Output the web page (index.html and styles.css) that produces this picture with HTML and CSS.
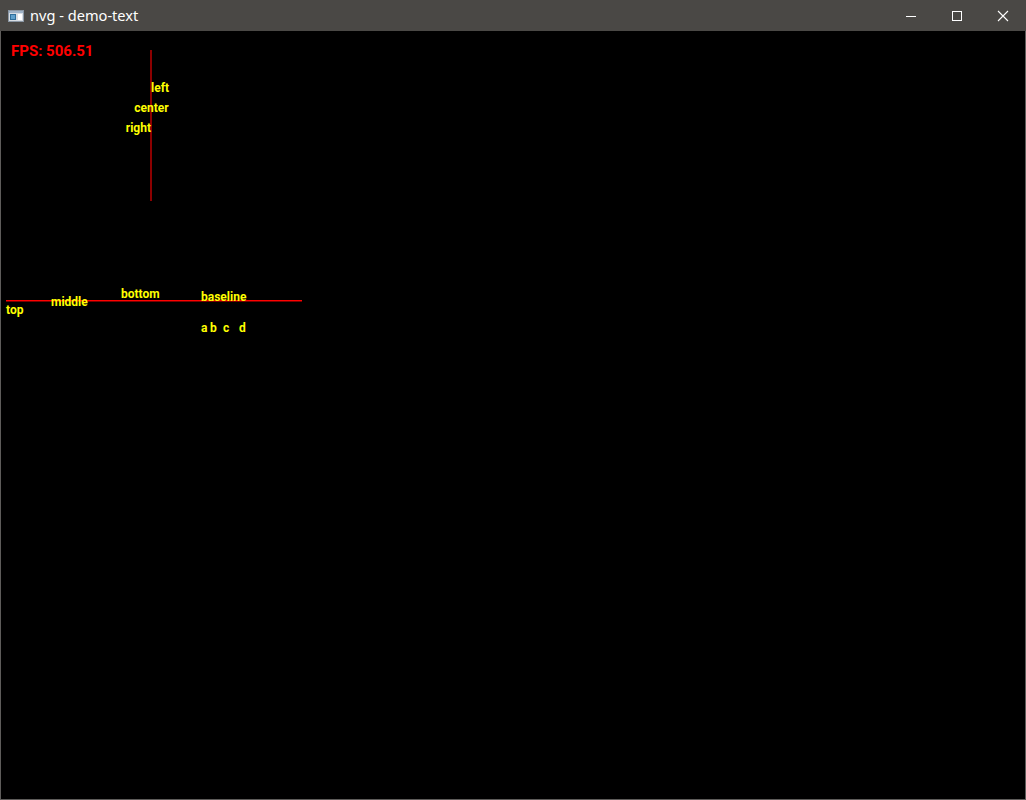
FILE: index.html
```html
<!DOCTYPE html>
<html>
<head>
<meta charset="utf-8">
<title>nvg - demo-text</title>
<link rel="stylesheet" href="styles.css">
</head>
<body>
<div class="window">
  <div class="titlebar">
    <div class="app">
      <svg class="app-icon" width="16" height="16" viewBox="0 0 16 16">
        <rect x="0.5" y="2.5" width="15" height="11" fill="#d8dde3" stroke="#8a96a3"/>
        <rect x="1" y="3" width="14" height="2" fill="#9fb2c6"/>
        <rect x="2" y="6" width="6" height="6" fill="#2f6e9a"/>
        <rect x="3" y="7" width="4" height="4" fill="#5fa0cc"/>
        <rect x="10" y="6" width="4" height="6" fill="#ffffff"/>
      </svg>
      <span class="title">nvg - demo-text</span>
    </div>
    <div class="controls">
      <div class="ctl"><svg width="12" height="12" viewBox="0 0 12 12"><path d="M1 6.5H11" stroke="#fff" stroke-width="1"/></svg></div>
      <div class="ctl"><svg width="12" height="12" viewBox="0 0 12 12"><rect x="1.5" y="1.5" width="9" height="9" fill="none" stroke="#fff" stroke-width="1"/></svg></div>
      <div class="ctl"><svg width="12" height="12" viewBox="0 0 12 12"><path d="M1 1L11 11M11 1L1 11" stroke="#fff" stroke-width="1.1"/></svg></div>
    </div>
  </div>
  <div class="canvas">
    <span class="fps">FPS: 506.51</span>
    <div class="vline"></div>
    <div class="hline"></div>
    <span class="lbl l-left">left</span>
    <span class="lbl l-center">center</span>
    <span class="lbl l-right">right</span>
    <span class="lbl l-top">top</span>
    <span class="lbl l-middle">middle</span>
    <span class="lbl l-bottom">bottom</span>
    <span class="lbl l-baseline">baseline</span>
    <span class="lbl ch ch-a">a</span>
    <span class="lbl ch ch-b">b</span>
    <span class="lbl ch ch-c">c</span>
    <span class="lbl ch ch-d">d</span>
  </div>
</div>
</body>
</html>
```
FILE: styles.css
```css
html, body {
  margin: 0;
  padding: 0;
  background: #000;
}
.window {
  width: 1026px;
  height: 800px;
  box-sizing: border-box;
  border: 1px solid #5e5c5a;
  border-top: none;
  display: flex;
  flex-direction: column;
  background: #000;
}
.titlebar {
  height: 31px;
  background: #4a4845;
  display: flex;
  align-items: center;
  justify-content: space-between;
  margin: 0 -1px;
  flex: none;
}
.app {
  display: flex;
  align-items: center;
  gap: 6px;
  padding-left: 8px;
}
.app-icon {
  display: block;
}
.title {
  font-family: "Noto Sans", "Open Sans", sans-serif;
  font-size: 14.6px;
  color: #ffffff;
  line-height: 16px;
  padding-bottom: 1px;
}
.controls {
  display: flex;
  height: 31px;
}
.ctl {
  width: 46px;
  height: 31px;
  display: flex;
  align-items: center;
  justify-content: center;
}
.ctl svg { display: block; }
.canvas {
  position: relative;
  flex: 1;
  background: #000;
  overflow: hidden;
}
.fps {
  position: absolute;
  left: 10px;
  top: 13px;
  font-family: Roboto, "Liberation Sans", sans-serif;
  font-weight: 700;
  font-size: 15px;
  line-height: 15px;
  color: #ff0000;
  white-space: nowrap;
}
.vline {
  position: absolute;
  left: 149px;
  top: 19px;
  width: 2px;
  height: 151px;
  background: #8c0000;
}
.hline {
  position: absolute;
  left: 5px;
  top: 269px;
  width: 296px;
  height: 1px;
  background: #ff0000;
  box-shadow: 0 1px 0 #7a0000;
}
.lbl {
  position: absolute;
  font-family: Roboto, "Liberation Sans", sans-serif;
  font-weight: 700;
  font-size: 12px;
  line-height: 12px;
  color: #ffff00;
  white-space: nowrap;
}
.l-left { left: 150px; top: 51px; }
.l-center { left: 150.5px; top: 71px; transform: translateX(-50%); }
.l-right { right: calc(100% - 150px); top: 91px; }
.l-top { left: 5px; top: 273px; }
.l-middle { left: 50px; top: 265px; }
.l-bottom { left: 120px; top: 257px; }
.l-baseline { left: 200px; top: 260px; }
.ch { top: 291px; }
.ch-a { left: 200px; }
.ch-b { left: 209px; }
.ch-c { left: 222px; }
.ch-d { left: 238px; }
```
